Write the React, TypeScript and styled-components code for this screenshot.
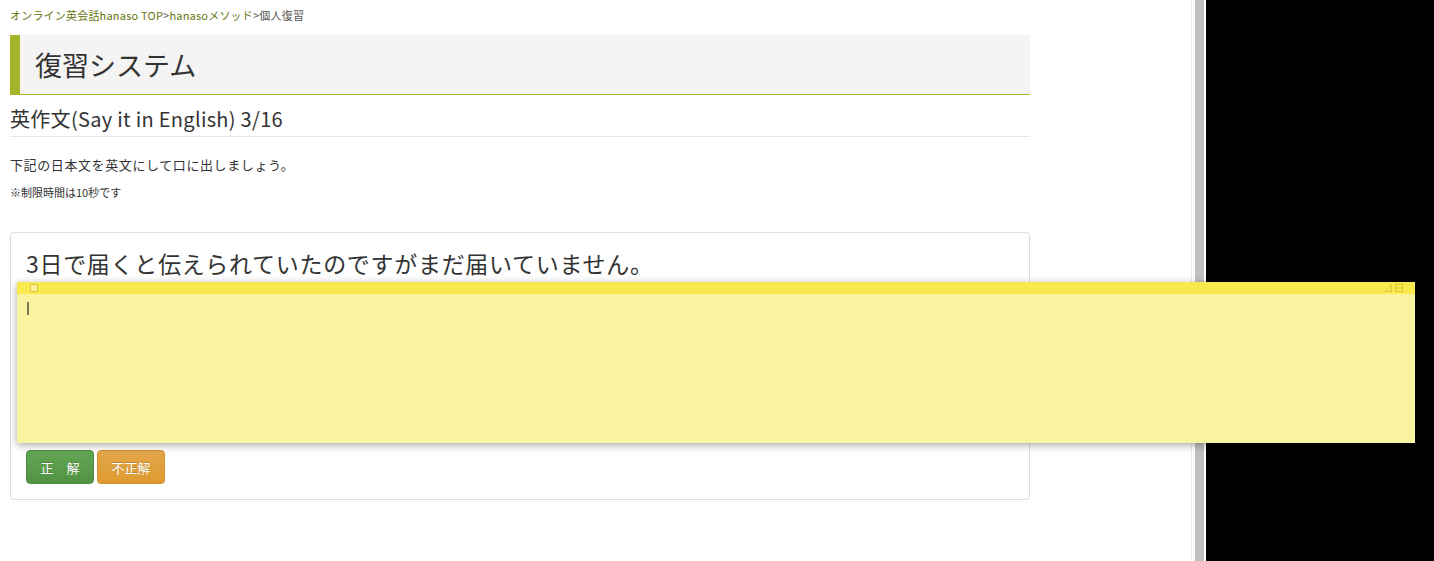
import React from "react";
import styled, { createGlobalStyle } from "styled-components";

const Global = createGlobalStyle`
  html, body { margin: 0; padding: 0; background: #fff; }
  body { font-family: "Noto Sans CJK JP", "Noto Sans", sans-serif; color: #333; }
`;

const Screen = styled.div`
  position: relative;
  display: flex;
  width: 1434px;
  height: 561px;
  overflow: hidden;
`;

const Page = styled.div`
  width: 1191px;
  padding: 0 10px;
  box-sizing: border-box;
  background: #fff;
`;

const Content = styled.div`
  width: 1020px;
`;

const Scrollbar = styled.div`
  width: 15px;
  display: flex;
  background: #fff;
  border-left: 1px solid #e8e8e8;
  box-sizing: border-box;
  padding: 0 2px 0 3px;
`;

const Thumb = styled.div`
  flex: 1;
  background: #bfbfbf;
`;

const Black = styled.div`
  flex: 1;
  background: #000;
`;

const Breadcrumb = styled.div`
  font-size: 11px;
  line-height: 14px;
  padding-top: 8px;
  color: #555;
  letter-spacing: 0.2px;
`;

const Crumb = styled.span`
  color: #66770f;
`;

const TitleBox = styled.div`
  margin-top: 13px;
  height: 59px;
  background: #f4f4f4;
  border-left: 10px solid #a4b52c;
  border-bottom: 1px solid #a4b52c;
  display: flex;
  align-items: center;
  padding-left: 15px;
`;

const Title = styled.h1`
  margin: 0;
  font-size: 27px;
  font-weight: 400;
  color: #333;
`;

const SubHeading = styled.h2`
  margin: 0;
  margin-top: 10px;
  padding-bottom: 3px;
  font-size: 20px;
  line-height: 28px;
  font-weight: 400;
  color: #333;
  letter-spacing: 0.3px;
  border-bottom: 1px solid #e5e5e5;
`;

const Instruction = styled.p`
  margin: 19px 0 0;
  font-size: 13px;
  line-height: 18px;
  letter-spacing: 0.6px;
`;

const Note = styled.p`
  margin: 11px 0 0;
  font-size: 11px;
  line-height: 14px;
`;

const Card = styled.div`
  margin-top: 33px;
  height: 268px;
  border: 1px solid #ddd;
  border-radius: 4px;
  box-sizing: border-box;
  padding: 14px 15px 15px;
  display: flex;
  flex-direction: column;
  justify-content: space-between;
`;

const Question = styled.div`
  font-size: 23px;
  line-height: 32px;
  color: #333;
  letter-spacing: 0.7px;
`;

const Buttons = styled.div`
  display: flex;
  gap: 3px;
`;

const Button = styled.button<{ $tone: "ok" | "ng" }>`
  height: 34px;
  width: 68px;
  border-radius: 4px;
  border: 1px solid ${(p) => (p.$tone === "ok" ? "#4f8a3f" : "#d08f2a")};
  background: ${(p) =>
    p.$tone === "ok"
      ? "linear-gradient(#62a653, #529343)"
      : "linear-gradient(#e3a64a, #dd9a2f)"};
  color: #fff;
  font-family: "Noto Sans CJK JP", sans-serif;
  font-size: 13px;
  padding: 0;
  white-space: pre;
  text-shadow: 0 -1px 0 rgba(0, 0, 0, 0.2);
`;

const Sticky = styled.div`
  position: absolute;
  left: 17px;
  top: 282px;
  width: 1398px;
  height: 161px;
  background: #faf3a0;
  box-shadow: 0 2px 8px rgba(0, 0, 0, 0.35);
  display: flex;
  flex-direction: column;
`;

const StickyBar = styled.div`
  height: 12px;
  background: #f8e94f;
  display: flex;
  align-items: center;
  justify-content: space-between;
  padding: 0 12px 0 13px;
`;

const Square = styled.div`
  width: 6px;
  height: 6px;
  border: 1px solid #d9c93a;
  background: #fbf19a;
`;

const BarIcons = styled.div`
  display: flex;
  gap: 3px;
  align-items: center;
`;

const Caret = styled.div`
  margin: 8px 0 0 10px;
  width: 2px;
  height: 13px;
  background: #7d7a52;
`;

export default function App() {
  return (
    <>
      <Global />
      <Screen>
        <Page>
          <Content>
            <Breadcrumb>
              <Crumb>オンライン英会話hanaso TOP</Crumb>&gt;<Crumb>hanasoメソッド</Crumb>&gt;個人復習
            </Breadcrumb>
            <TitleBox>
              <Title>復習システム</Title>
            </TitleBox>
            <SubHeading>英作文(Say it in English) 3/16</SubHeading>
            <Instruction>下記の日本文を英文にして口に出しましょう。</Instruction>
            <Note>※制限時間は10秒です</Note>
            <Card>
              <Question>3日で届くと伝えられていたのですがまだ届いていません。</Question>
              <Buttons>
                <Button $tone="ok">{"正　解"}</Button>
                <Button $tone="ng">不正解</Button>
              </Buttons>
            </Card>
          </Content>
        </Page>
        <Scrollbar>
          <Thumb />
        </Scrollbar>
        <Black />
        <Sticky>
          <StickyBar>
            <Square />
            <BarIcons>
              <svg width="8" height="8" viewBox="0 0 8 8">
                <path d="M7.5 0.5 L7.5 7.5 L0.5 7.5 Z" fill="none" stroke="#d9c93a" strokeWidth="1" />
              </svg>
              <svg width="8" height="8" viewBox="0 0 8 8">
                <rect x="0.5" y="0.5" width="7" height="7" fill="none" stroke="#d9c93a" />
                <line x1="0.5" y1="4" x2="7.5" y2="4" stroke="#d9c93a" />
              </svg>
            </BarIcons>
          </StickyBar>
          <Caret />
        </Sticky>
      </Screen>
    </>
  );
}
